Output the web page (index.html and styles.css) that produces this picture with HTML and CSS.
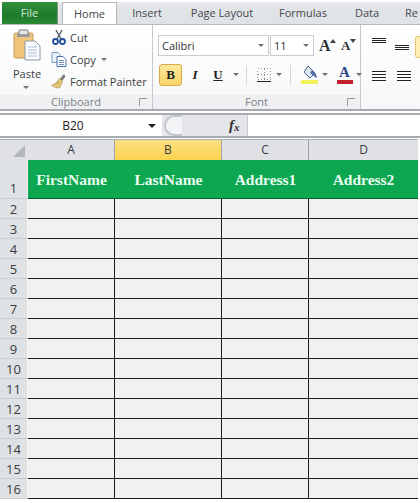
FILE: index.html
```html
<!DOCTYPE html>
<html lang="en">
<head>
<meta charset="utf-8">
<title>Excel sheet</title>
<link rel="stylesheet" href="styles.css">
</head>
<body>
<div class="tabs">
  <div class="tab file">File</div>
  <div class="tab home">Home</div>
  <div class="tab t-insert">Insert</div>
  <div class="tab t-page">Page Layout</div>
  <div class="tab t-form">Formulas</div>
  <div class="tab t-data">Data</div>
  <div class="tab t-re">Re</div>
</div>
<div class="ribbon">
  <section class="group clip">
    <div class="group-body clip-body">
      <div class="paste">
        <svg class="paste-icon" width="28" height="32" viewBox="0 0 28 32">
          <rect x="1" y="4" width="19" height="25" rx="1.5" fill="#f0c67c" stroke="#c29a55"/>
          <rect x="6" y="1" width="9" height="6" rx="1" fill="#e8e8ea" stroke="#77787c"/>
          <rect x="4" y="5" width="13" height="3" fill="#9a9ca0"/>
          <path d="M12 12h10l5 5v14H12z" fill="#fbfcff" stroke="#8d96a8"/>
          <path d="M15 18h9M15 21h9M15 24h9M15 27h9" stroke="#a9bdd8"/>
        </svg>
        <span class="paste-label">Paste</span>
        <span class="arrow paste-arrow"></span>
      </div>
      <div class="clip-list">
        <div class="clip-row">
          <svg class="clip-icon" width="16" height="16" viewBox="0 0 16 16">
            <path d="M5 1l5 9M11 1L6 10" stroke="#5a6470" stroke-width="1.5" fill="none"/>
            <circle cx="4.5" cy="12.5" r="2.5" fill="none" stroke="#23509a" stroke-width="1.8"/>
            <circle cx="11.5" cy="12.5" r="2.5" fill="none" stroke="#23509a" stroke-width="1.8"/>
          </svg>
          <span>Cut</span>
        </div>
        <div class="clip-row">
          <svg class="clip-icon" width="16" height="16" viewBox="0 0 16 16">
            <path d="M1 1.500h6l2 2v8H1z" fill="#e9f0fa" stroke="#7f9cc4"/>
            <path d="M6 5.500h6l3 3v7H6z" fill="#fff" stroke="#476ea8"/>
            <path d="M8 9.500h5M8 11.500h5M8 13.500h5" stroke="#6e8fbd"/>
          </svg>
          <span>Copy</span>
          <span class="arrow copy-arrow"></span>
        </div>
        <div class="clip-row">
          <svg class="clip-icon" width="16" height="16" viewBox="0 0 16 16">
            <path d="M9 6l3-4c1-1 3 0 2 2l-3 4z" fill="#77787c"/>
            <path d="M8.500 5.500l3 3-3 6.500c-3 0-6-1-8-3 3 0 5-2 8-6.500z" fill="#eed07e" stroke="#a88a3e" stroke-width=".7"/>
            <path d="M3 12l5-4M5.500 13l4-4" stroke="#a88a3e" stroke-width=".7"/>
          </svg>
          <span>Format Painter</span>
        </div>
      </div>
    </div>
    <div class="group-label">Clipboard<span class="launcher"></span></div>
  </section>
  <section class="group font">
    <div class="group-body font-body">
      <div class="font-row one">
        <div class="combo name-combo"><span>Calibri</span><span class="arrow"></span></div>
        <div class="combo size-combo"><span>11</span><span class="arrow"></span></div>
        <span class="size-btn grow">A<svg width="6" height="4" viewBox="0 0 6 4" class="caret"><path d="M0 4l3-4 3 4z" fill="#444"/></svg></span>
        <span class="size-btn shrink">A<svg width="6" height="4" viewBox="0 0 6 4" class="caret"><path d="M0 0l3 4 3-4z" fill="#444"/></svg></span>
      </div>
      <div class="font-row two">
        <span class="fmt bold">B</span>
        <span class="fmt ital">I</span>
        <span class="fmt under">U</span>
        <span class="arrow u-arrow"></span>
        <span class="sep sep-a"></span>
        <svg class="borders" width="17" height="16" viewBox="0 0 17 16" shape-rendering="crispEdges">
          <path d="M1.500 1.500h13v11h-13zM8.500 1.500v11M1.500 7.500h13" fill="none" stroke="#8f9296" stroke-dasharray="1 2"/>
          <path d="M1 14.500h14" stroke="#222"/>
        </svg>
        <span class="arrow b-arrow"></span>
        <span class="sep sep-b"></span>
        <svg class="fill" width="18" height="20" viewBox="0 0 18 20">
          <path d="M7 1l7 7-5 5-6-6z" fill="#dfe6f2" stroke="#566a8a"/>
          <path d="M11 5l4 4 1 4-2-1-5-4z" fill="#4f6fa8"/>
          <rect x="0" y="15" width="17" height="4" fill="#f4f25a"/>
        </svg>
        <span class="arrow f-arrow"></span>
        <span class="color-a"><span class="color-letter">A</span><span class="color-bar"></span></span>
        <span class="arrow c-arrow"></span>
      </div>
    </div>
    <div class="group-label">Font<span class="launcher"></span></div>
  </section>
  <section class="group align">
    <div class="align-row">
      <span class="lines top"><i></i><i></i><i></i></span>
      <span class="lines mid"><i></i><i></i><i></i></span>
      <span class="hot"></span>
    </div>
    <div class="align-row second">
      <span class="lines left"><i></i><i></i><i></i><i></i></span>
      <span class="lines center"><i></i><i></i><i></i><i></i></span>
    </div>
  </section>
</div>
<div class="fbar">
  <div class="namebox"><span class="name">B20</span><span class="arrow dark"></span></div>
  <div class="fbtns">
    <span class="cap"></span>
    <span class="fx">f<sub>x</sub></span>
  </div>
  <div class="finput"></div>
</div>
<div class="sheet">
  <div class="corner"><span class="tri"></span></div>
  <div class="ch">A</div><div class="ch sel">B</div><div class="ch">C</div><div class="ch last">D</div>
  <div class="rh r1">1</div>
  <div class="hc">FirstName</div><div class="hc">LastName</div><div class="hc">Address1</div><div class="hc last">Address2</div>
  <div class="rh">2</div><div class="c"></div><div class="c"></div><div class="c"></div><div class="c last"></div>
  <div class="rh">3</div><div class="c"></div><div class="c"></div><div class="c"></div><div class="c last"></div>
  <div class="rh">4</div><div class="c"></div><div class="c"></div><div class="c"></div><div class="c last"></div>
  <div class="rh">5</div><div class="c"></div><div class="c"></div><div class="c"></div><div class="c last"></div>
  <div class="rh">6</div><div class="c"></div><div class="c"></div><div class="c"></div><div class="c last"></div>
  <div class="rh">7</div><div class="c"></div><div class="c"></div><div class="c"></div><div class="c last"></div>
  <div class="rh">8</div><div class="c"></div><div class="c"></div><div class="c"></div><div class="c last"></div>
  <div class="rh">9</div><div class="c"></div><div class="c"></div><div class="c"></div><div class="c last"></div>
  <div class="rh">10</div><div class="c"></div><div class="c"></div><div class="c"></div><div class="c last"></div>
  <div class="rh">11</div><div class="c"></div><div class="c"></div><div class="c"></div><div class="c last"></div>
  <div class="rh">12</div><div class="c"></div><div class="c"></div><div class="c"></div><div class="c last"></div>
  <div class="rh">13</div><div class="c"></div><div class="c"></div><div class="c"></div><div class="c last"></div>
  <div class="rh">14</div><div class="c"></div><div class="c"></div><div class="c"></div><div class="c last"></div>
  <div class="rh">15</div><div class="c"></div><div class="c"></div><div class="c"></div><div class="c last"></div>
  <div class="rh">16</div><div class="c"></div><div class="c"></div><div class="c"></div><div class="c last"></div>
</div>
</body>
</html>
```
FILE: styles.css
```css
* { box-sizing: border-box; }
html, body { margin: 0; padding: 0; width: 420px; height: 503px; overflow: hidden; background: #fff; }
body { font-family: "Open Sans", "Noto Sans", sans-serif; font-size: 11px; color: #3b3d40; }

/* tabs */
.tabs { display: flex; height: 25px; padding: 2px 0 0 2px; background: linear-gradient(#f0f1f3, #e2e5e8 30%, #e0e3e6); border-bottom: 1px solid #b5b8bc; overflow: hidden; background-clip: content-box; }
.tab { height: 22px; line-height: 21px; text-align: center; font-size: 11px; color: #44474b; flex: none; }
.file { width: 56px; background: linear-gradient(#2f8f3c, #1f7a2c 60%, #2a8a35); color: #d6ecd6; border-right: 1px solid #7e9a80; }
.home { width: 55px; margin-left: 4px; height: 23px; background: #fff; border: 1px solid #b5b8bc; border-bottom: 0; position: relative; }
.t-insert { width: 60px; }
.t-page { width: 90px; }
.t-form { width: 72px; }
.t-data { width: 56px; }
.t-re { width: 30px; text-align: left; padding-left: 10px; }

/* ribbon */
.ribbon { display: flex; height: 86px; background: linear-gradient(#fff, #f6f7f8); border-bottom: 2px solid #a6a9ad; }
.group { flex: none; display: flex; flex-direction: column; border-right: 1px solid #c5c8cc; }
.clip { width: 153px; }
.font { width: 208px; }
.align { flex: 1; border-right: 0; padding: 0 0 0 11px; }
.group-body { height: 70px; flex: none; }
.group-label { height: 14px; position: relative; text-align: center; font-size: 11px; line-height: 13px; color: #7d8085; background: #eff0f2; }
.launcher { position: absolute; right: 5px; top: 3px; width: 8px; height: 8px; border-left: 1px solid #999; border-top: 1px solid #999; }

.clip-body { display: flex; }
.paste { width: 50px; padding: 4px 0 0 13px; display: flex; flex-direction: column; }
.paste-icon { display: block; }
.paste-label { width: 27px; text-align: center; margin-top: 5px; line-height: 15px; font-size: 11px; white-space: nowrap; }
.paste-arrow { margin: 5px 0 0 10px; }
.clip-list { display: flex; flex-direction: column; gap: 6px; padding-top: 4px; margin-left: 1px; }
.clip-row { display: flex; align-items: center; gap: 3px; height: 16px; white-space: nowrap; font-size: 11px; }
.clip-icon { flex: none; }
.arrow { display: inline-block; width: 0; height: 0; border: 3px solid transparent; border-top: 3px solid #6d7074; border-bottom: 0; flex: none; }
.copy-arrow { margin-left: 2px; }

.font-body { padding: 10px 0 0 5px; }
.font-row { display: flex; align-items: center; }
.font-row.one { height: 21px; }
.font-row.two { height: 23px; margin-top: 7px; }
.combo { height: 21px; background: #fff; border: 1px solid #c9ccd0; display: flex; align-items: center; justify-content: space-between; padding: 0 4px 0 3px; font-size: 11px; color: #2f3134; }
.name-combo { width: 111px; }
.size-combo { width: 44px; margin-left: 1px; }
.size-btn { font-family: "Liberation Serif", serif; font-weight: bold; color: #2d3137; position: relative; line-height: 20px; }
.grow { font-size: 16px; margin-left: 5px; width: 22px; }
.shrink { font-size: 13px; width: 16px; }
.caret { position: absolute; top: 3px; left: 11px; }
.shrink .caret { left: 9px; }
.fmt { font-family: "Liberation Serif", serif; font-weight: bold; font-size: 13px; color: #222; text-align: center; flex: none; }
.bold { width: 23px; height: 22px; line-height: 20px; margin-left: 1px; background: linear-gradient(#fde89a, #fbd568); border: 1px solid #d9a84a; border-radius: 3px; }
.ital { width: 20px; margin-left: 3px; font-style: italic; }
.under { width: 14px; margin-left: 6px; text-decoration: underline; }
.u-arrow { margin-left: 8px; }
.sep { width: 1px; height: 20px; background: #d5d7da; flex: none; }
.sep-a { margin-left: 7px; }
.borders { margin-left: 9px; flex: none; }
.b-arrow { margin-left: 3px; }
.sep-b { margin-left: 8px; }
.fill { margin-left: 10px; flex: none; }
.f-arrow { margin-left: 3px; }
.color-a { width: 17px; margin-left: 8px; display: flex; flex-direction: column; align-items: center; flex: none; }
.color-letter { font-family: "Liberation Serif", serif; font-weight: bold; font-size: 15px; line-height: 14px; color: #2b4a86; }
.color-bar { width: 16px; height: 4px; background: #c2202c; margin-top: 1px; }
.c-arrow { margin-left: 3px; }

.align-row { display: flex; height: 22px; margin-top: 11px; gap: 9px; align-items: flex-start; }
.align-row.second { margin-top: 9px; gap: 11px; }
.lines { display: flex; flex-direction: column; gap: 1px; width: 14px; flex: none; }
.lines i { display: block; height: 1px; background: #222; }
.lines.top { margin-top: 2px; }
.lines.mid { margin-top: 9px; }
.lines.left, .lines.center { margin-top: 4px; gap: 2px; }
.hot { width: 8px; height: 22px; margin-left: -3px; background: #fdeeb4; border: 1px solid #e5c574; border-right: 0; border-radius: 3px 0 0 3px; }

/* formula bar */
.fbar { display: flex; height: 25px; margin-top: 2px; background: #fff; border-top: 2px solid #a9acb0; border-bottom: 2px solid #a9acb0; }
.namebox { width: 160px; flex: none; margin-left: 2px; display: flex; align-items: center; position: relative; }
.name { width: 142px; text-align: center; font-size: 12px; color: #222; }
.arrow.dark { border-width: 4px 4px 0; border-top-color: #222; margin-left: 4px; }
.fbtns { width: 85px; flex: none; background: #e4e6e9; position: relative; }
.cap { display: block; width: 18px; height: 21px; border: 2px solid #c3c6ca; border-right: 0; border-radius: 11px 0 0 11px; background: #f3f4f5; margin-left: 2px; }
.fx { position: absolute; left: 67px; top: 0; font-family: "Liberation Serif", serif; font-style: italic; font-weight: bold; font-size: 15px; line-height: 20px; color: #333; }
.fx sub { font-size: 11px; vertical-align: -1px; line-height: 0; }
.finput { flex: 1; border-left: 1px solid #c5c8cc; }

/* sheet */
.sheet { display: grid; grid-template-columns: 28px 87px 107px 87px 109px; grid-template-rows: 21px 39px repeat(15, 20px); margin-top: 1px; width: 418px; }
.corner { background: #dfe1e4; position: relative; border-top: 1px solid #aeb1b5; }
.tri { position: absolute; right: 3px; bottom: 3px; border: 6px solid transparent; border-right-color: #b4b7bb; border-bottom-color: #b4b7bb; }
.ch { background: #dfe1e4; border-top: 1px solid #aeb1b5; border-right: 1px solid #9fa2a6; text-align: center; font-size: 12px; line-height: 19px; color: #3a3c3f; }
.ch.sel { background: linear-gradient(#fbe083, #fcd24f); }
.ch.last { border-right: 0; }
.rh { background: #dfe2e5; border-bottom: 1px solid #c9ccd0; border-right: 1px solid #eef0f2; text-align: center; font-size: 13px; line-height: 19px; color: #3a3c3f; padding-top: 1px; }
.rh.r1 { padding-top: 19px; }
.hc { background: #0ca750; border-bottom: 1px solid #0b5c30; color: #eafbf1; font-family: "Liberation Serif", serif; font-weight: bold; font-size: 15.5px; line-height: 40px; height: 39px; overflow: hidden; text-align: center; white-space: nowrap; }
.c { background: #f1f1f1; border-right: 1px solid #1d1d1d; border-bottom: 1px solid #1d1d1d; }
.c.last { border-right: 0; }
```
